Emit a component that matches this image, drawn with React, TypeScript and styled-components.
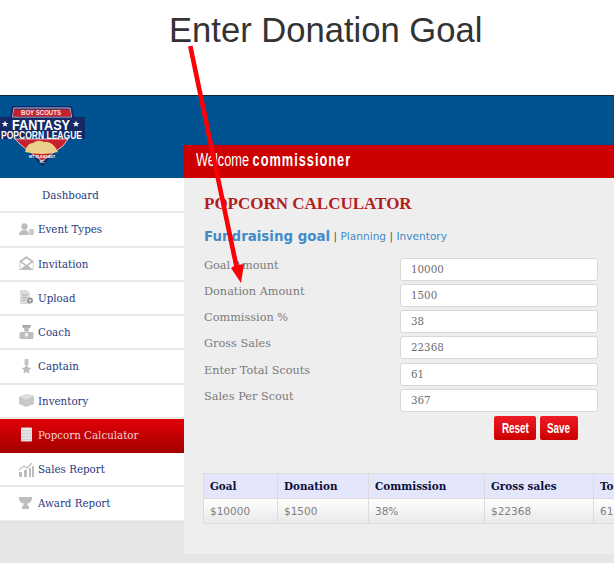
import styled, { createGlobalStyle } from 'styled-components'
import type { ReactNode } from 'react'

const GlobalStyle = createGlobalStyle`
  html, body {
    margin: 0;
    padding: 0;
    background: #e6e6e6;
  }
  #root {
    width: 614px;
    height: 563px;
    overflow: hidden;
  }
  * {
    box-sizing: border-box;
  }
`

const Page = styled.div`
  position: relative;
  width: 614px;
  height: 563px;
  overflow: hidden;
  background: #e6e6e6;
`

const TitleBar = styled.div`
  height: 96px;
  background: #fff;
  border-bottom: 1px solid #10253f;
  padding-top: 8px;
  padding-left: 169px;
`

const Title = styled.h1`
  margin: 0;
  font-family: 'Liberation Sans', Arial, sans-serif;
  font-size: 34.6px;
  line-height: 44px;
  font-weight: 400;
  color: #333;
  white-space: nowrap;
`

const Banner = styled.header`
  display: flex;
  height: 82px;
  background: #015291;
`

const LogoBox = styled.div`
  width: 184px;
  flex: none;
  padding-top: 9px;
`

const WelcomeBar = styled.div`
  flex: 1;
  align-self: flex-end;
  height: 33px;
  background: #cc0000;
  padding-left: 12px;
  font-family: 'Liberation Sans', sans-serif;
  font-size: 18px;
  line-height: 31px;
  color: #fff;
  white-space: nowrap;
`

/* no condensed face is installed, so the narrow headline type is squeezed */
const Squeezed = styled.span<{ $scale: number }>`
  display: inline-block;
  transform: scaleX(${({ $scale }) => $scale});
  transform-origin: left center;
`

const WelcomeName = styled.strong`
  letter-spacing: 1.4px;
  margin-left: 5px;
`

const Body = styled.div`
  display: grid;
  grid-template-columns: 184px 1fr;
  align-items: start;
`

const Sidebar = styled.nav`
  background: #fff;
  padding-top: 1px;
  border-bottom: 1px solid #dcdcdc;
`

const NavRow = styled.div<{ $active?: boolean; $plain?: boolean }>`
  display: flex;
  align-items: center;
  height: 34.25px;
  padding-left: ${({ $plain }) => ($plain ? '42px' : '19px')};
  gap: 4px;
  border-bottom: 2px solid ${({ $active }) => ($active ? '#a80000' : '#e8e8e8')};
  background: ${({ $active }) => ($active ? 'linear-gradient(#e20008, #a50000)' : '#fff')};
  font-family: 'DejaVu Serif', serif;
  font-size: 10.3px;
  color: ${({ $active }) => ($active ? '#f6d5d5' : '#2a3a80')};
  white-space: nowrap;
`

const NavIcon = styled.svg`
  width: 15px;
  height: 15px;
  flex: none;
`

const Panel = styled.main`
  height: 376px;
  background: #eeeeee;
  padding: 16px 0 0 20px;
`

const Heading = styled.h2`
  margin: 0;
  font-family: 'Liberation Serif', serif;
  font-size: 17px;
  line-height: 20px;
  font-weight: 700;
  color: #b31d1d;
  white-space: nowrap;
`

const Tabs = styled.div`
  margin-top: 12px;
  height: 20px;
  display: flex;
  align-items: center;
  font-family: 'DejaVu Sans', sans-serif;
  font-size: 10.6px;
  color: #555;
  white-space: pre;
`

const ActiveTab = styled.span`
  font-size: 13.4px;
  font-weight: 700;
  color: #428bca;
`

const TabLink = styled.span`
  color: #428bca;
`

const Form = styled.div`
  margin-top: 12px;
  width: 394px;
  display: flex;
  flex-direction: column;
  gap: 3.15px;
`

const FormRow = styled.div`
  display: grid;
  grid-template-columns: 196px 198px;
  height: 23px;
`

const Label = styled.span`
  font-family: 'DejaVu Serif', serif;
  font-size: 11.3px;
  line-height: 15px;
  color: #7a7a7a;
  white-space: nowrap;
`

const Input = styled.div`
  height: 23px;
  padding-left: 10px;
  background: #fff;
  border: 1px solid #d8d8d8;
  border-radius: 3px;
  font-family: 'DejaVu Serif', serif;
  font-size: 10.3px;
  line-height: 21px;
  color: #6e6e6e;
`

const Actions = styled.div`
  display: flex;
  justify-content: flex-end;
  gap: 4px;
  width: 374px;
  margin-top: 4px;
`

const Button = styled.div<{ $width: number }>`
  width: ${({ $width }) => $width}px;
  height: 24px;
  border-radius: 2px;
  background: linear-gradient(#ee1c25, #cc0000);
  font-family: 'Liberation Sans', sans-serif;
  font-size: 15px;
  font-weight: 700;
  line-height: 24px;
  text-align: center;
  color: #fff;
`

const ButtonText = styled.span`
  display: inline-block;
  transform: scaleX(0.66);
`

const TableWrap = styled.div`
  margin: 33px 0 0 -1px;
  overflow: hidden;
`

const Table = styled.div`
  display: grid;
  grid-template-columns: 74px 91px 116px 109px 80px;
  width: 470px;
  border-top: 1px solid #dcdcdc;
  border-left: 1px solid #dcdcdc;
`

const HeadCell = styled.div`
  height: 25px;
  padding-left: 6px;
  background: #e4e6fc;
  border-right: 1px solid #dcdcdc;
  border-bottom: 1px solid #dcdcdc;
  font-family: 'DejaVu Serif', serif;
  font-size: 10.4px;
  font-weight: 700;
  line-height: 24px;
  color: #0c1038;
  white-space: nowrap;
`

const DataCell = styled.div`
  height: 25px;
  padding-left: 6px;
  background: linear-gradient(#ffffff, #e9e9e9);
  border-right: 1px solid #dcdcdc;
  border-bottom: 1px solid #dcdcdc;
  font-family: 'DejaVu Sans', sans-serif;
  font-size: 10.5px;
  line-height: 24px;
  color: #808080;
  white-space: nowrap;
`

const Arrow = styled.svg`
  position: absolute;
  left: 0;
  top: 0;
  pointer-events: none;
`

const Logo = () => (
  <svg width="86" height="62" viewBox="0 0 86 62">
    <path d="M12 1H72L74 12H85V34H69L42 61L15 34H0V12H10Z" fill="#142a66" />
    <path d="M14 3H70L71.5 12H12.5Z" fill="none" stroke="#fff" strokeWidth="0.7" />
    <path d="M14 4.5H70L71 11.5H13Z" fill="#c8202c" />
    <path d="M15 34H68L63 41L42 56L22 41Z" fill="#c8202c" stroke="#fff" strokeWidth="0.7" />
    <path d="M25 47Q27 38 33 38Q38 34 44 37Q52 35 58 47Q42 51 25 47Z" fill="#eccf8a" />
    <text x="21" y="10" textLength="40" lengthAdjust="spacingAndGlyphs" fontFamily="'Liberation Sans', sans-serif" fontSize="6.4" fontWeight="700" fill="#f6e6e6">BOY SCOUTS</text>
    <text x="12" y="24.5" textLength="58" lengthAdjust="spacingAndGlyphs" fontFamily="'Liberation Sans', sans-serif" fontSize="15" fontWeight="700" fill="#fff">FANTASY</text>
    <text x="1" y="34" textLength="81" lengthAdjust="spacingAndGlyphs" fontFamily="'Liberation Sans', sans-serif" fontSize="10.4" fontWeight="700" fill="#fff">POPCORN LEAGUE</text>
    <text x="42" y="53" textAnchor="middle" fontFamily="'Liberation Sans', sans-serif" fontSize="3.6" fontWeight="700" fill="#fff">MT. PLEASANT</text>
    <text x="42" y="57.5" textAnchor="middle" fontFamily="'Liberation Sans', sans-serif" fontSize="3.6" fontWeight="700" fill="#fff">SC</text>
    <path d="M5 15.5l.9 2.4h2.5l-2 1.5.8 2.4L5 20.4l-2.2 1.4.8-2.4-2-1.5h2.5ZM76 15.5l.9 2.4h2.5l-2 1.5.8 2.4-2.2-1.4-2.2 1.4.8-2.4-2-1.5h2.5Z" fill="#fff" />
  </svg>
)

const icons: Record<string, ReactNode> = {
  event: (
    <>
      <circle cx="5.5" cy="4.5" r="3.2" />
      <path d="M0 12Q1 8 5.5 8Q8 8 9.5 10V13H0Z" />
      <rect x="10" y="7" width="5" height="6" rx="1" fill="#ccc" />
    </>
  ),
  invite: <path d="M7.5 0L14.5 5V14H.5V5ZM3 5.5L7.5 9L12 5.5L7.5 2.5ZM1.2 13.4L6 9.5L1.2 6.5ZM13.8 13.4L9 9.5L13.8 6.5Z" fillRule="evenodd" />,
  upload: (
    <>
      <path d="M1 0H8L11 3V14H1Z" fill="#dcdcdc" />
      <circle cx="11" cy="10.5" r="3" fill="#999" />
      <circle cx="11" cy="10.5" r="1" fill="#eee" />
      <path d="M3 5H9M3 7.5H8M3 10H7" stroke="#b0b0b0" fill="none" />
    </>
  ),
  coach: (
    <>
      <path d="M3 0H12L11 3H4Z" fill="#a8a8a8" />
      <circle cx="7.5" cy="4.5" r="2.5" />
      <rect x="0.5" y="7" width="14" height="7" rx="1.5" />
      <path d="M6 8H9V11L7.5 12L6 11Z" fill="#eee" />
    </>
  ),
  captain: (
    <>
      <rect x="5.5" y="0" width="4" height="6" fill="#c4c4c4" />
      <path d="M7.5 5l1.8 3.5L12.5 9 10 11.2l.6 3.4L7.5 13l-3.1 1.6.6-3.4L2.5 9l3.2-.5Z" />
    </>
  ),
  inventory: (
    <>
      <path d="M0 4L8 1L15 3V11L7 14L0 11Z" fill="#c8c8c8" />
      <path d="M0 4L8 6.5L15 3L8 1Z" fill="#dedede" />
    </>
  ),
  calculator: (
    <>
      <rect x="2" y="0.5" width="11" height="14" rx="1" fill="#e6e6e6" />
      <path d="M2 3.5H13M2 6.5H13M2 9.5H13M2 12.5H13M5 3.5V14M8 3.5V14M11 3.5V14" stroke="#bbb" strokeWidth="0.4" />
    </>
  ),
  sales: (
    <>
      <path d="M0 10H3V15H0ZM5 8H8V15H5ZM10 6H12V15H10ZM13 4H15V15H13Z" />
      <path d="M0 8L5 4L8 6L13 1" stroke="#c4c4c4" strokeWidth="1.4" fill="none" />
    </>
  ),
  award: <path d="M0 1H13V3Q12 7 8.5 7.5V10H10V13H3V10H4.5V7.5Q1 7 0 3Z" />,
}

const navItems = [
  { label: 'Event Types', icon: 'event' },
  { label: 'Invitation', icon: 'invite' },
  { label: 'Upload', icon: 'upload' },
  { label: 'Coach', icon: 'coach' },
  { label: 'Captain', icon: 'captain' },
  { label: 'Inventory', icon: 'inventory' },
  { label: 'Popcorn Calculator', icon: 'calculator', active: true },
  { label: 'Sales Report', icon: 'sales' },
  { label: 'Award Report', icon: 'award' },
]

const fields = [
  ['Goal Amount', '10000'],
  ['Donation Amount', '1500'],
  ['Commission %', '38'],
  ['Gross Sales', '22368'],
  ['Enter Total Scouts', '61'],
  ['Sales Per Scout', '367'],
]

const tableHead = ['Goal', 'Donation', 'Commission', 'Gross sales', 'Total Scouts']
const tableData = ['$10000', '$1500', '38%', '$22368', '61']

export default function App() {
  return (
    <Page>
      <GlobalStyle />
      <TitleBar>
        <Title>Enter Donation Goal</Title>
      </TitleBar>
      <Banner>
        <LogoBox>
          <Logo />
        </LogoBox>
        <WelcomeBar>
          <Squeezed $scale={0.71}>
            Welcome<WelcomeName>commissioner</WelcomeName>
          </Squeezed>
        </WelcomeBar>
      </Banner>
      <Body>
        <Sidebar>
          <NavRow $plain>Dashboard</NavRow>
          {navItems.map((item) => (
            <NavRow key={item.label} $active={item.active}>
              <NavIcon viewBox="0 0 15 15" fill="#bdbdbd">
                {icons[item.icon]}
              </NavIcon>
              {item.label}
            </NavRow>
          ))}
        </Sidebar>
        <Panel>
          <Heading>POPCORN CALCULATOR</Heading>
          <Tabs>
            <ActiveTab>Fundraising goal</ActiveTab> | <TabLink>Planning</TabLink> | <TabLink>Inventory</TabLink>
          </Tabs>
          <Form>
            {fields.map(([label, value]) => (
              <FormRow key={label}>
                <Label>{label}</Label>
                <Input>{value}</Input>
              </FormRow>
            ))}
          </Form>
          <Actions>
            <Button $width={42}>
              <ButtonText>Reset</ButtonText>
            </Button>
            <Button $width={38}>
              <ButtonText>Save</ButtonText>
            </Button>
          </Actions>
          <TableWrap>
            <Table>
              {tableHead.map((h) => (
                <HeadCell key={h}>{h}</HeadCell>
              ))}
              {tableData.map((d) => (
                <DataCell key={d}>{d}</DataCell>
              ))}
            </Table>
          </TableWrap>
        </Panel>
      </Body>
      <Arrow width="614" height="563" viewBox="0 0 614 563">
        <path d="M188 46.5L192.5 45.5L238.5 265L244 264L241 283L231 268L234 266Z" fill="#fb0007" />
      </Arrow>
    </Page>
  )
}
